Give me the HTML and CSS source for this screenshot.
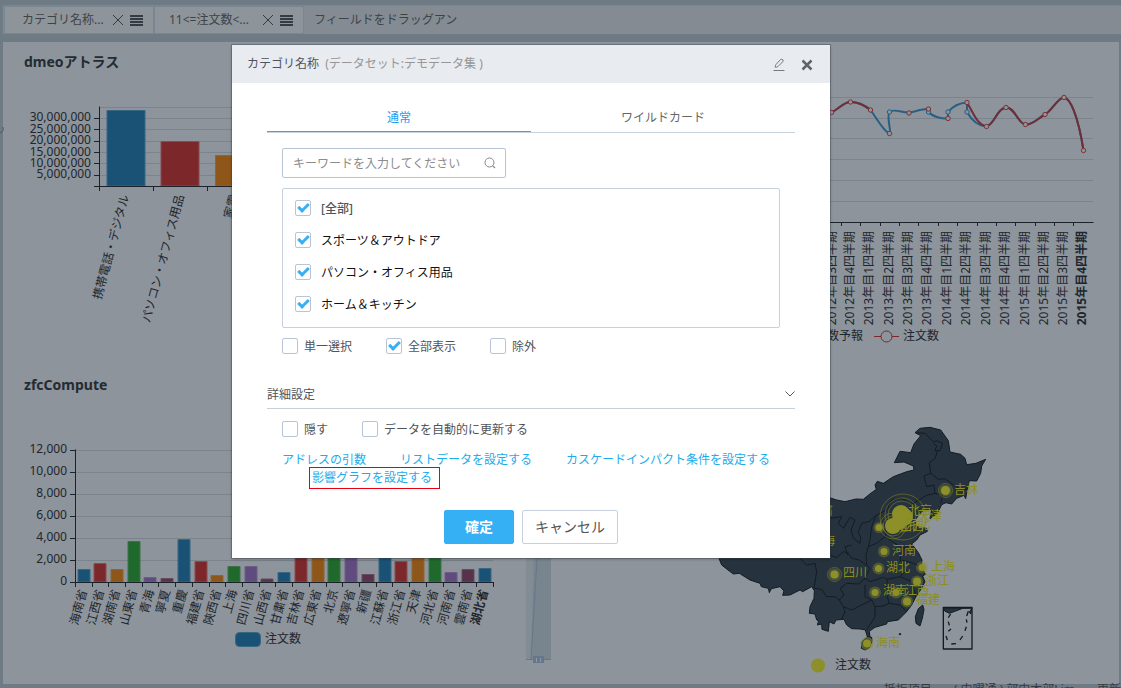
FILE: index.html
```html
<!DOCTYPE html>
<html lang="ja">
<head>
<meta charset="utf-8">
<title>dmeoアトラス</title>
<link rel="stylesheet" href="styles.css">
</head>
<body>
<header class="filters">
  <div class="chip"><span class="chip-name">カテゴリ名称...</span>
    <button class="chip-btn" aria-label="削除"><svg width="12" height="12" viewBox="0 0 12 12"><path d="M1 1L11 11M11 1L1 11"/></svg></button>
    <button class="chip-btn" aria-label="メニュー"><svg width="13" height="12" viewBox="0 0 13 12"><path stroke-width="2" d="M0 2H13M0 5H13M0 8H13M0 11H13"/></svg></button>
  </div>
  <div class="chip chip-tight"><span class="chip-name">11&lt;=注文数&lt;...</span>
    <button class="chip-btn" aria-label="削除"><svg width="12" height="12" viewBox="0 0 12 12"><path d="M1 1L11 11M11 1L1 11"/></svg></button>
    <button class="chip-btn" aria-label="メニュー"><svg width="13" height="12" viewBox="0 0 13 12"><path stroke-width="2" d="M0 2H13M0 5H13M0 8H13M0 11H13"/></svg></button>
  </div>
  <span class="drop-hint">フィールドをドラッグアン</span>
</header>

<main class="sheet">
  <section class="panel">
    <h2 class="panel-title">dmeoアトラス</h2>
    <svg class="chart" viewBox="3 82 557 283" preserveAspectRatio="xMinYMin meet">
      <path class="grid" d="M100 107.5H520M100 118.5H520M100 129.5H520M100 141.5H520M100 152.5H520M100 163.5H520M100 175.5H520"/>
      <path class="blue" d="M107 110.500h38V186H107z"/><path class="red" d="M161 141.500h38V186H161z"/><path class="orange" d="M215.500 155.500h38.500V186h-38.500z"/>
      <path class="axis" d="M99.500 106.500V191M94 186.500H520M94 118.500H99M94 129.500H99M94 141.500H99M94 152.500H99M94 163.500H99M94 175.500H99M153.500 186V191M207.500 186V191"/>
      <g class="label end"><text x="91" y="121">30,000,000</text><text x="91" y="133">25,000,000</text><text x="91" y="144">20,000,000</text><text x="91" y="156">15,000,000</text><text x="91" y="167">10,000,000</text><text x="91" y="178">5,000,000</text>
        <text transform="translate(129 196) rotate(-75)">携帯電話・デジタル</text>
        <text transform="translate(184 196) rotate(-75)">パソコン・オフィス用品</text>
        <text transform="translate(238 196) rotate(-75)">家電</text></g>
      <path class="scroll-mark" d="M3 127q1 5-3 6"/>
    </svg>
  </section>

  <section class="panel">
    <h2 class="panel-title"></h2>
    <svg class="chart" viewBox="560 82 559 283" preserveAspectRatio="xMinYMin meet">
      <path class="grid" d="M600 97.500H1093M600 118.500H1093M600 138.500H1093M600 159.500H1093M600 180.500H1093M600 201.500H1093"/>
      <path class="axis" d="M600 222.500H1093.500M841.500 222V226M860.500 222V226M880.500 222V226M899.500 222V226M918.500 222V226M938.500 222V226M957.500 222V226M977.500 222V226M996.500 222V226M1015.500 222V226M1035.500 222V226M1054.500 222V226M1073.500 222V226"/>
      <path class="line line-blue" d="M831 112.500C838 110 843 102 850.500 102S864 104 870.500 110C878 120 883 131 889.500 133.500C892 133 886 116 889.500 112C893 108 903 113 909 112.500S923 108 928.500 109V112C933 117 942 119 948 118.500V112C953 106 959 103 967 102.500V112C972 121 979 126 986.500 126.500C995 124 997 108 1006 107.500S1018 124 1025.500 124.500S1038 118 1045 114.500S1058 97 1064 97.500S1078 115 1083.500 150.500"/>
      <path class="line line-red" d="M831 112.500C838 110 843 102 850.500 102S864 105 870.500 110M967 102.500C973 112 977 125 986.500 126.500C995 124 997 108 1006 107.500S1018 124 1025.500 124.500S1038 118 1045 114.500S1058 97 1064 97.500S1078 115 1083.500 150.500"/>
      <g class="dot dot-blue"><circle cx="889.500" cy="112" r="2.200"/><circle cx="928.500" cy="112" r="2.200"/><circle cx="948" cy="112" r="2.200"/><circle cx="967" cy="112" r="2.200"/></g>
      <g class="dot dot-red"><circle cx="831.500" cy="112.500" r="2.200"/><circle cx="850.500" cy="102" r="2.200"/><circle cx="870.500" cy="110" r="2.200"/><circle cx="889.500" cy="133.500" r="2.200"/><circle cx="909" cy="113" r="2.200"/><circle cx="928.500" cy="109" r="2.200"/><circle cx="948" cy="118.500" r="2.200"/><circle cx="967" cy="102.500" r="2.200"/><circle cx="986.500" cy="126.500" r="2.200"/><circle cx="1006" cy="107.500" r="2.200"/><circle cx="1025.500" cy="124.500" r="2.200"/><circle cx="1045" cy="114.500" r="2.200"/><circle cx="1064" cy="97.500" r="2.200"/><circle cx="1083.500" cy="150.500" r="2.200"/></g>
      <g class="label end"><text transform="translate(836 231) rotate(-90)">2012年目3四半期</text><text transform="translate(854 231) rotate(-90)">2012年目4四半期</text><text transform="translate(873 231) rotate(-90)">2013年目1四半期</text><text transform="translate(893 231) rotate(-90)">2013年目2四半期</text><text transform="translate(912 231) rotate(-90)">2013年目3四半期</text><text transform="translate(931 231) rotate(-90)">2013年目4四半期</text><text transform="translate(951 231) rotate(-90)">2014年目1四半期</text><text transform="translate(970 231) rotate(-90)">2014年目2四半期</text><text transform="translate(990 231) rotate(-90)">2014年目3四半期</text><text transform="translate(1009 231) rotate(-90)">2014年目4四半期</text><text transform="translate(1029 231) rotate(-90)">2015年目1四半期</text><text transform="translate(1048 231) rotate(-90)">2015年目2四半期</text><text transform="translate(1067 231) rotate(-90)">2015年目3四半期</text><text class="strong" transform="translate(1086 231) rotate(-90)">2015年目4四半期</text></g>
      <g class="label"><text x="803" y="340">注文数予報</text><text x="903" y="340">注文数</text></g>
      <path class="line-red legend-line" d="M874 336.500H899"/><circle class="legend-dot" cx="886.500" cy="336.500" r="5.500"/>
    </svg>
  </section>

  <section class="panel">
    <h2 class="panel-title">zfcCompute</h2>
    <svg class="chart" viewBox="3 405 557 279" preserveAspectRatio="xMinYMin meet">
      <path class="grid" d="M76 450.500H493M76 472.500H493M76 494.500H493M76 516.500H493M76 538.500H493M76 560.500H493"/>
      <path class="blue" d="M78 569.500h12V582h-12zM178 539.500h12V582h-12zM278 572.500h12V582h-12zM379 540h12V582h-12zM479 568.500h12V582h-12z"/>
      <path class="red" d="M94 563.500h12V582h-12zM195 561.500h12V582h-12zM295 550h12V582h-12zM395 561.500h12V582h-12z"/>
      <path class="orange" d="M111 569.500h12V582h-12zM211 575.500h12V582h-12zM312 550h12V582h-12zM412 550h12V582h-12z"/>
      <path class="green" d="M128 541.500h12V582h-12zM228 566.500h12V582h-12zM328 540h12V582h-12zM429 540h12V582h-12z"/>
      <path class="purple" d="M144 577.500h12V582h-12zM245 566.500h12V582h-12zM345 540h12V582h-12zM445 572.500h12V582h-12z"/>
      <path class="plum" d="M161 578.500h12V582h-12zM261 579h12V582h-12zM362 574.500h12V582h-12zM462 569.500h12V582h-12z"/>
      <path class="axis" d="M75.500 449.500V587M70 582.500H493.500M70 450.500H75M70 472.500H75M70 494.500H75M70 516.500H75M70 538.500H75M70 560.500H75M92.500 582V587M108.500 582V587M125.500 582V587M142.500 582V587M158.500 582V587M175.500 582V587M192.500 582V587M209.500 582V587M225.500 582V587M242.500 582V587M259.500 582V587M275.500 582V587M292.500 582V587M309.500 582V587M326.500 582V587M342.500 582V587M359.500 582V587M376.500 582V587M392.500 582V587M409.500 582V587M426.500 582V587M443.500 582V587M459.500 582V587M476.500 582V587M493.500 582V587"/>
      <g class="label end"><text x="67" y="453">12,000</text><text x="67" y="475">10,000</text><text x="67" y="497">8,000</text><text x="67" y="519">6,000</text><text x="67" y="541">4,000</text><text x="67" y="563">2,000</text><text x="67" y="585">0</text>
        <text transform="translate(87 591) rotate(-75)">海南省</text><text transform="translate(104 591) rotate(-75)">江西省</text><text transform="translate(120 591) rotate(-75)">湖南省</text><text transform="translate(137 591) rotate(-75)">山東省</text><text transform="translate(154 591) rotate(-75)">青海</text><text transform="translate(170 591) rotate(-75)">寧夏</text><text transform="translate(187 591) rotate(-75)">重慶</text><text transform="translate(204 591) rotate(-75)">福建省</text><text transform="translate(221 591) rotate(-75)">陝西省</text><text transform="translate(237 591) rotate(-75)">上海</text><text transform="translate(254 591) rotate(-75)">四川省</text><text transform="translate(271 591) rotate(-75)">山西省</text><text transform="translate(288 591) rotate(-75)">甘粛省</text><text transform="translate(304 591) rotate(-75)">吉林省</text><text transform="translate(321 591) rotate(-75)">広東省</text><text transform="translate(338 591) rotate(-75)">北京</text><text transform="translate(355 591) rotate(-75)">遼寧省</text><text transform="translate(371 591) rotate(-75)">新疆</text><text transform="translate(388 591) rotate(-75)">江蘇省</text><text transform="translate(405 591) rotate(-75)">浙江省</text><text transform="translate(421 591) rotate(-75)">天津</text><text transform="translate(438 591) rotate(-75)">河北省</text><text transform="translate(455 591) rotate(-75)">河南省</text><text transform="translate(472 591) rotate(-75)">雲南省</text><text class="strong" transform="translate(488 591) rotate(-75)">湖北省</text></g>
      <rect class="blue" x="235.500" y="632.500" width="25" height="14" rx="4"/>
      <text class="label" x="265" y="643">注文数</text>
      <path class="zoom-track" d="M526 440H551V659H526z"/><path class="zoom-area" d="M537 440H551V659H531z"/>
      <path class="zoom-line" d="M526 659.500H551M537 559L531 659"/><path class="zoom-handle" d="M533 656H544V663H533z"/><path class="zoom-grip" d="M536.500 658V662M540.500 658V662"/>
    </svg>
  </section>

  <section class="panel">
    <h2 class="panel-title"></h2>
    <svg class="chart" viewBox="560 405 559 279" preserveAspectRatio="xMinYMin meet">
      <g class="map" transform="translate(700 420) scale(.33333)">
        <path d="M57 380L57 415L65 435L84 450L100 462L118 460L150 480L180 490L184 500L205 505L208 518L214 506L240 500L252 513L248 526L270 525L300 510L308 515L335 500L343 512L342 535L330 560L328 580L345 582L350 600L356 602L352 615L365 612L366 628L385 634L388 605L402 612L408 600L432 598L440 615L455 626L480 627L496 630L502 650L510 652L508 634L525 622L560 612L562 605L595 600L620 575L635 555L648 530L665 505L675 485L668 468L676 463L664 440L666 420L655 398L635 372L650 360L660 345L682 334L680 325L650 320L645 300L665 275L695 268L690 296L712 280L725 254L738 248L755 252L770 235L792 226L797 236L802 208L808 182L830 183L842 160L845 138L857 118L828 130L800 134L795 115L782 103L750 96L745 62L722 30L690 22L660 25L645 38L662 47L642 72L632 98L600 94L583 128L612 126L640 138L642 150L620 155L580 170L550 190L532 184L525 195L529 208L507 224L490 238L468 237L435 245L410 240L385 232L350 240L350 380z"/>
        <path d="M668 555L672 568L667 595L660 618L648 610L646 590L655 566zM502 650L515 652L516 665L508 683L496 690L484 685L486 665zM598 641h4v3h-4z"/>
        <path d="M650 38L675 40L700 65L712 63L728 70L720 92L705 92L710 78L700 70M712 92L706 115L688 128L692 160L672 168L680 200L702 195L705 220L728 225L722 250M692 160L715 178L735 176L760 195L780 205L805 208M705 220L680 226L640 250L620 270M640 250L660 270M390 295L425 290L415 310L430 325L450 292L465 300L453 330L460 355L480 370L482 350L474 338L485 310L510 304L528 286L560 270L575 240L600 235L625 245M528 286L515 320L510 360L505 380L530 370L555 350L570 310M555 350L585 370L610 385L635 372M505 380L498 405L500 435L510 445L495 475L510 485L550 472L562 478L600 470L620 450L600 420L605 390M390 405L410 413L430 395L445 400L455 415L478 420L498 435M455 375L435 380L443 405M600 470L635 485L648 530M562 478L558 510L567 550L550 558L525 560L515 540L495 530L495 495M567 550L600 555L620 575M525 560L525 590L500 630M515 540L485 555L455 570L430 560L418 540L432 525L420 505L440 490L475 492L495 475M343 505L365 508L380 530L405 530L418 540M300 415L320 435L345 430L350 455L342 505M430 560L435 575L425 598M605 420L640 430L665 440"/>
        <path class="inset" d="M730 562H816V687H730z"/>
        <path d="M730 564H815L788 565L770 572L748 580L734 573zM816 562L812 582L807 575"/>
        <path class="inset-dash" d="M752 582L745 593M745 605L748 616M753 627L745 634M738 648L742 660M754 672L768 671M780 660L788 648M795 632L799 620M801 608L799 598M800 588L805 574"/>
      </g>
      <g class="halo"><circle cx="903" cy="517" r="23"/><circle cx="902" cy="515" r="17"/><circle cx="902" cy="515" r="14"/><circle cx="893" cy="526" r="13"/><circle cx="893" cy="526" r="10"/><circle cx="945.500" cy="490.500" r="7"/><circle cx="867" cy="643.500" r="6"/><circle cx="834.500" cy="574.500" r="7"/></g>
      <g class="glow"><circle cx="945.500" cy="490.500" r="6"/><circle cx="879" cy="527.500" r="5.500"/><circle cx="884" cy="551.500" r="6"/><circle cx="878.500" cy="568.500" r="6"/><circle cx="922" cy="567.500" r="6"/><circle cx="917" cy="581.500" r="6"/><circle cx="834.500" cy="574.500" r="6"/><circle cx="875" cy="592.500" r="6"/><circle cx="896" cy="592.500" r="6"/><circle cx="907" cy="601.500" r="6"/><circle cx="867" cy="643.500" r="6"/></g>
      <g class="spot"><circle cx="945.500" cy="490.500" r="4.500"/><circle cx="879" cy="527.500" r="3.500"/><circle cx="884" cy="551.500" r="3.500"/><circle cx="878.500" cy="568.500" r="3.500"/><circle cx="922" cy="567.500" r="3.500"/><circle cx="917" cy="581.500" r="4"/><circle cx="834.500" cy="574.500" r="4"/><circle cx="875" cy="592.500" r="3.500"/><circle cx="896" cy="592.500" r="3.500"/><circle cx="907" cy="601.500" r="4"/><circle cx="867" cy="643.500" r="4"/><circle cx="901" cy="514" r="9"/><circle cx="904" cy="517" r="9"/><circle cx="893" cy="526" r="8"/><circle cx="899" cy="522" r="8"/><circle cx="818" cy="665.500" r="7"/></g>
      <g class="place"><text x="954" y="494">吉林</text><text x="908" y="515">北京</text><text x="918" y="520">天津</text><text x="900" y="531">山西</text><text x="906" y="529">河北</text><text x="892" y="555">河南</text><text x="886" y="572">湖北</text><text x="931" y="571">上海</text><text x="925" y="585">浙江</text><text x="843" y="577">四川</text><text x="883" y="595">湖南</text><text x="905" y="595">江西</text><text x="916" y="604">福建</text><text x="876" y="647">海南</text><text x="809" y="515">甘粛</text><text x="811" y="545">青海</text></g>
      <text class="label" x="835" y="669">注文数</text>
    </svg>
  </section>
</main>
<footer class="status"><span>抵拒項目</span><span>( 内曜通 ) 部门本部Lim</span><span>更新</span></footer>

<div class="dialog" role="dialog" aria-labelledby="dialog-title">
  <div class="dialog-head">
    <h1 class="dialog-title" id="dialog-title">カテゴリ名称 <span class="muted">&nbsp;(データセット:デモデータ集 )</span></h1>
    <button class="icon-btn" aria-label="編集"><svg width="12" height="14" viewBox="0 0 12 14"><path d="M.5 13.500H11.500M3 7.500L7.500 2.500Q9 1.700 10 3Q10.600 4 9.500 5L5 9.500Q3.500 10.500 2.300 10.300Q2 9 3 7.500z" fill="none" stroke="#777b80"/></svg></button>
    <button class="icon-btn" aria-label="閉じる"><svg width="12" height="14" viewBox="0 0 12 14"><path d="M1.500 3.500L10.500 12.500M10.500 3.500L1.500 12.500" stroke="#606468" stroke-width="2.500"/></svg></button>
  </div>
  <div class="dialog-body">
    <div class="tabs" role="tablist"><button class="tab tab-on" role="tab" aria-selected="true">通常</button><button class="tab" role="tab" aria-selected="false">ワイルドカード</button></div>
    <div class="inner">
      <div class="search"><input class="search-input" type="text" aria-label="キーワード" placeholder="キーワードを入力してください"><svg width="12" height="12" viewBox="0 0 12 12"><circle cx="5.500" cy="5.500" r="4.500" fill="none" stroke="#888"/><path d="M8.800 8.800L11 11" stroke="#888" stroke-width="1.200"/></svg></div>
      <div class="list">
        <label class="list-row list-all"><input type="checkbox" checked><span class="caption">[全部]</span></label>
        <label class="list-row"><input type="checkbox" checked><span class="caption">スポーツ＆アウトドア</span></label>
        <label class="list-row"><input type="checkbox" checked><span class="caption">パソコン・オフィス用品</span></label>
        <label class="list-row"><input type="checkbox" checked><span class="caption">ホーム＆キッチン</span></label>
      </div>
      <div class="options"><label class="option"><input type="checkbox"><span class="caption">単一選択</span></label><label class="option"><input type="checkbox" checked><span class="caption">全部表示</span></label><label class="option"><input type="checkbox"><span class="caption">除外</span></label></div>
    </div>
    <button class="section-head" aria-expanded="true"><span class="caption">詳細設定</span><svg width="10" height="6" viewBox="0 0 10 6"><path d="M.5 .5L5 5L9.500 .5" fill="none" stroke="#55595e"/></svg></button>
    <div class="inner advanced">
      <div class="options"><label class="option"><input type="checkbox"><span class="caption">隠す</span></label><label class="option"><input type="checkbox"><span class="caption">データを自動的に更新する</span></label></div>
      <div class="links"><a href="#">アドレスの引数</a><a href="#">リストデータを設定する</a><a href="#">カスケードインパクト条件を設定する</a></div>
      <a class="link-marked" href="#">影響グラフを設定する</a>
    </div>
    <div class="actions"><button class="btn btn-primary">確定</button><button class="btn">キャンセル</button></div>
  </div>
</div>
</body>
</html>
```
FILE: styles.css
```css
* { box-sizing: border-box; }
body {
  margin: 0; height: 100vh; overflow: hidden; background: #6e7b85;
  font: 12px/16px "Noto Sans", "Noto Sans CJK JP", sans-serif; color: #50545a;
}
button, input { font: inherit; color: inherit; margin: 0; }
button { background: none; border: 0; padding: 0; cursor: pointer; }
svg { display: block; }

.filters { display: flex; align-items: center; height: 29px; margin: 5px 0 8px 3px; padding: 0 1px; background: #848b92; color: #3d4349; border-top: 1px solid #7a8690; }
.chip { display: flex; align-items: center; width: 150px; height: 28px; padding: 0 10px 0 17px; background: #8d949a; border: 1px solid #798691; }
.chip-tight { padding-left: 14px; }
.chip-name { flex: 1; white-space: nowrap; }
.chip-btn { margin-left: 6px; }
.chip-btn svg { stroke: #343b42; }
.drop-hint { margin-left: 10px; }

.sheet { display: grid; grid-template-columns: 557fr 559fr; margin: 0 2px 0 3px; background: #8d949b; }
.panel { min-width: 0; }
.panel-title { margin: 0; height: 40px; padding: 0 21px; font-size: 14px; line-height: 40px; color: #242b32; }
.chart { width: 100%; overflow: visible; }
.status { display: flex; justify-content: flex-end; gap: 22px; line-height: 12px; color: #343b42; }

.grid { stroke: #7b838b; }
.axis { stroke: #1b222b; fill: none; }
.label { font-size: 12px; fill: #1f262d; }
.end { text-anchor: end; }
.strong { font-weight: 700; }
.blue { fill: #1a5276; stroke: #366783; }
.red { fill: #7c282b; stroke: #8b4b50; }
.orange { fill: #8f5619; stroke: #8d6538; }
.green { fill: #20692d; stroke: #3f7249; }
.purple { fill: #5f4b7d; stroke: #6f5d84; }
.plum { fill: #56324b; stroke: #664a60; }
.scroll-mark { fill: none; stroke: #4f5961; }
.line { fill: none; stroke-width: 2; }
.line-blue { stroke: #285f85; }
.line-red { stroke: #722e38; }
.dot { fill: #8d949b; }
.dot-blue { stroke: #285f85; }
.dot-red { stroke: #7c3238; }
.legend-line { stroke: #7c282b; }
.legend-dot { fill: #8d949b; stroke: #7c282b; }
.zoom-track { fill: #818c95; }
.zoom-area { fill: #78858f; }
.zoom-line { fill: none; stroke: #677787; }
.zoom-handle { fill: #66778a; }
.zoom-grip { stroke: #8d99a6; }
.map { fill: #26323d; stroke: #121c24; stroke-width: 3; stroke-linejoin: round; }
.map path:nth-child(3), .map .inset, .map .inset-dash { fill: none; }
.map .inset, .map .inset-dash { stroke-width: 4; }
.halo { fill: none; stroke: #8c8e27; stroke-opacity: .5; }
.glow { fill: #8c8e27; fill-opacity: .4; }
.spot { fill: #8d8f28; }
.place { font-size: 12px; fill: #8c8f20; }

.dialog { position: absolute; top: 45px; left: 232px; width: 598px; background: #fff; box-shadow: 0 0 0 1px rgba(60, 66, 74, .35), 0 1px 3px rgba(0, 0, 0, .3); }
.dialog-head { display: flex; align-items: center; gap: 16px; height: 38px; padding: 0 17px 0 15px; background: #e8ebf0; }
.dialog-title { flex: 1; margin: 0; font-size: 12px; font-weight: 400; }
.muted { color: #969696; }
.dialog-body { padding: 20px 35px 14px; }
.tabs { display: grid; grid-template-columns: 1fr 1fr; border-bottom: 1px solid #c7d2df; }
.tab { height: 29px; padding-top: 2px; border-bottom: 1px solid transparent; color: #666; }
.tab-on { color: #1f9cf0; border-color: #36a9ea; }
.inner { padding: 0 15px; }
.search { display: flex; align-items: center; width: 224px; height: 30px; margin-top: 15px; padding: 0 9px 0 10px; border: 1px solid #b9c4d4; border-radius: 2px; }
.search-input { flex: 1; min-width: 0; padding: 2px 0 0; border: 0; outline: 0; }
.search-input::placeholder { color: #8c8c8c; opacity: 1; }
.list { margin-top: 10px; padding: 3px 12px; border: 1px solid #c7d0dd; border-radius: 2px; height: 140px; overflow: hidden; }
.list-row { display: flex; align-items: center; gap: 10px; height: 32px; color: #111; }
.list-all { color: #50545a; font-weight: 500; }
.caption { padding-top: 2px; }
.options { display: flex; gap: 34px; margin-top: 8px; }
.option { display: flex; align-items: center; gap: 6px; height: 20px; }
input[type="checkbox"] { appearance: none; display: flex; align-items: center; justify-content: center; width: 16px; height: 16px; border: 1px solid #b9c4d4; border-radius: 2px; background: #fff; }
input[type="checkbox"]:checked::before { content: ""; box-sizing: border-box; width: 11px; height: 7px; margin-bottom: 3px; border: solid #36b0f5; border-width: 0 0 3px 3px; transform: rotate(-45deg); }
.section-head { display: flex; align-items: center; justify-content: space-between; width: 100%; height: 30px; margin-top: 23px; border-bottom: 1px solid #c7cfd9; }
.advanced .options { margin-top: 10px; }
.links { display: flex; gap: 34px; margin-top: 13px; }
.links a { line-height: 15px; white-space: nowrap; }
.links a, .link-marked { color: #1cacec; text-decoration: none; }
.link-marked { display: inline-block; margin-left: 27px; padding: 0 7px 0 2px; line-height: 20px; border: 1px solid #e60012; }
.actions { display: flex; justify-content: center; gap: 8px; margin-top: 21px; }
.btn { height: 34px; padding: 0 12px; border: 1px solid #c7d0dd; border-radius: 2px; font-size: 14px; color: #555; }
.btn-primary { padding: 0 20px; background: #35b0f5; border-color: #35b0f5; color: #fff; font-weight: 700; }
```
